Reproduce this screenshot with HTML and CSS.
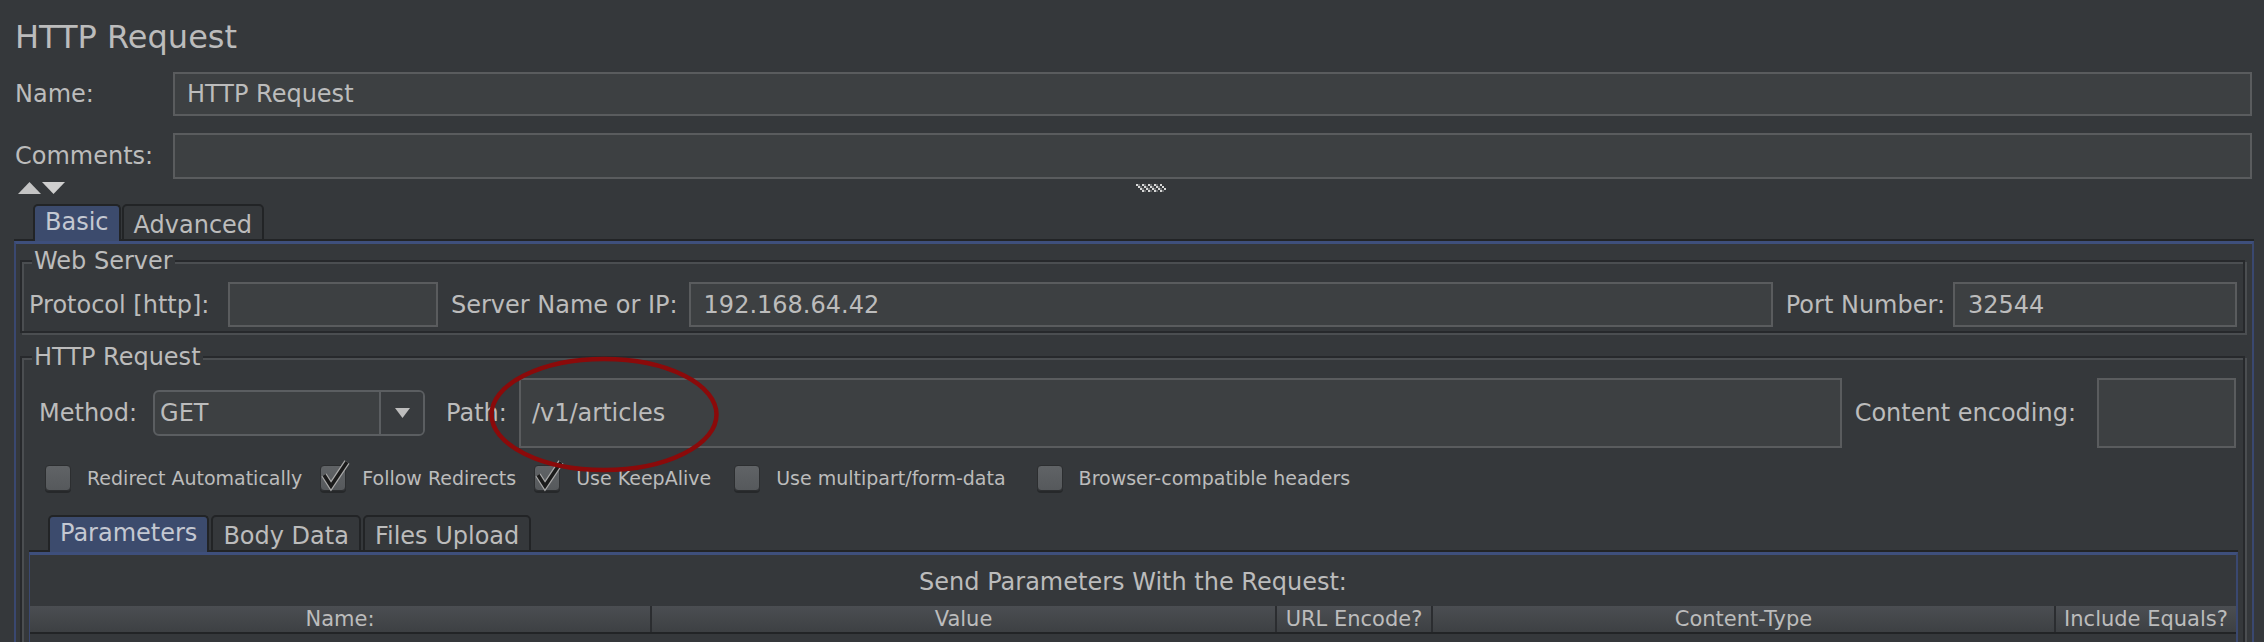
FILE: index.html
```html
<!DOCTYPE html>
<html lang="en">
<head>
<meta charset="utf-8">
<title>HTTP Request</title>
<link rel="stylesheet" href="styles.css">
</head>
<body>
<div class="page">
  <h1 class="title">HTTP Request</h1>

  <div class="row name-row">
    <label class="lbl-main">Name:</label>
    <div class="input">HTTP Request</div>
  </div>
  <div class="row comments-row">
    <label class="lbl-main">Comments:</label>
    <div class="input"></div>
  </div>

  <div class="splitter">
    <svg class="arrows" width="48" height="12" viewBox="0 0 48 12">
      <polygon points="0,12 11.5,0 23,12" fill="#c4c4c4"/>
      <polygon points="24,0 47,0 35.5,12" fill="#cfcfcf"/>
    </svg>
    <svg class="grip" width="30" height="8" viewBox="0 0 30 8">
      <g fill="#d8d8d8">
        <rect x="0" y="0" width="2" height="2"/><rect x="2" y="2" width="2" height="2"/><rect x="4" y="4" width="2" height="2"/><rect x="6" y="6" width="2" height="2"/>
        <rect x="6" y="0" width="2" height="2"/><rect x="8" y="2" width="2" height="2"/><rect x="10" y="4" width="2" height="2"/><rect x="12" y="6" width="2" height="2"/>
        <rect x="12" y="0" width="2" height="2"/><rect x="14" y="2" width="2" height="2"/><rect x="16" y="4" width="2" height="2"/><rect x="18" y="6" width="2" height="2"/>
        <rect x="18" y="0" width="2" height="2"/><rect x="20" y="2" width="2" height="2"/><rect x="22" y="4" width="2" height="2"/><rect x="24" y="6" width="2" height="2"/>
        <rect x="24" y="0" width="2" height="2"/><rect x="26" y="2" width="2" height="2"/><rect x="28" y="4" width="2" height="2"/>
      </g>
      <g fill="#6a6c6e">
        <rect x="2" y="0" width="2" height="2"/><rect x="4" y="2" width="2" height="2"/><rect x="6" y="4" width="2" height="2"/><rect x="8" y="6" width="2" height="2"/>
        <rect x="8" y="0" width="2" height="2"/><rect x="10" y="2" width="2" height="2"/><rect x="12" y="4" width="2" height="2"/><rect x="14" y="6" width="2" height="2"/>
        <rect x="14" y="0" width="2" height="2"/><rect x="16" y="2" width="2" height="2"/><rect x="18" y="4" width="2" height="2"/><rect x="20" y="6" width="2" height="2"/>
        <rect x="20" y="0" width="2" height="2"/><rect x="22" y="2" width="2" height="2"/><rect x="24" y="4" width="2" height="2"/><rect x="26" y="6" width="2" height="2"/>
      </g>
    </svg>
  </div>

  <div class="tabs outer-tabs">
    <div class="tab active">Basic</div>
    <div class="tab">Advanced</div>
  </div>

  <div class="panel">
    <fieldset class="group web">
      <legend>Web Server</legend>
      <div class="frow web-row">
        <label class="lbl lbl-protocol">Protocol [http]:</label>
        <div class="input protocol-input"></div>
        <label class="lbl lbl-server">Server Name or IP:</label>
        <div class="input server-input">192.168.64.42</div>
        <label class="lbl lbl-port">Port Number:</label>
        <div class="input port-input">32544</div>
      </div>
    </fieldset>

    <fieldset class="group req">
      <legend>HTTP Request</legend>
      <div class="frow method-row">
        <label class="lbl lbl-method">Method:</label>
        <div class="combo">
          <span class="combo-value">GET</span>
          <span class="combo-btn">
            <svg width="15" height="10" viewBox="0 0 15 10"><polygon points="0,0 15,0 7.5,10" fill="#bdbdbd"/></svg>
          </span>
        </div>
        <label class="lbl lbl-path">Path:</label>
        <div class="input path-input">/v1/articles</div>
        <label class="lbl lbl-enc">Content encoding:</label>
        <div class="input enc-input"></div>
      </div>

      <div class="checks">
        <div class="check"><span class="box"></span><span class="check-label">Redirect Automatically</span></div>
        <div class="check"><span class="box checked"><svg class="tick" width="32" height="34" viewBox="0 0 32 34"><path d="M6 17 L13 28 L29 4" fill="none" stroke="#a8a8a8" stroke-width="6" stroke-linejoin="miter"/><path d="M6 17 L13 28 L29 4" fill="none" stroke="#1b1b1b" stroke-width="3.5"/></svg></span><span class="check-label">Follow Redirects</span></div>
        <div class="check keepalive"><span class="box checked"><svg class="tick" width="32" height="34" viewBox="0 0 32 34"><path d="M6 17 L13 28 L29 4" fill="none" stroke="#a8a8a8" stroke-width="6" stroke-linejoin="miter"/><path d="M6 17 L13 28 L29 4" fill="none" stroke="#1b1b1b" stroke-width="3.5"/></svg></span><span class="check-label">Use KeepAlive</span></div>
        <div class="check multipart"><span class="box"></span><span class="check-label">Use multipart/form-data</span></div>
        <div class="check"><span class="box"></span><span class="check-label">Browser-compatible headers</span></div>
      </div>

      <div class="tabs inner-tabs">
        <div class="tab active">Parameters</div>
        <div class="tab">Body Data</div>
        <div class="tab">Files Upload</div>
      </div>

      <div class="inner-panel">
        <div class="caption">Send Parameters With the Request:</div>
        <div class="thead">
          <div class="th">Name:</div>
          <div class="th">Value</div>
          <div class="th">URL Encode?</div>
          <div class="th">Content-Type</div>
          <div class="th">Include Equals?</div>
        </div>
        <div class="tbody"></div>
      </div>
    </fieldset>
  </div>

  <svg class="annotation" width="2264" height="642" viewBox="0 0 2264 642">
    <ellipse cx="604" cy="414.5" rx="112.5" ry="55.5" fill="none" stroke="#8b0a0a" stroke-width="4.5"/>
  </svg>
</div>
</body>
</html>
```

FILE: styles.css
```css
* { box-sizing: border-box; }

html, body {
  margin: 0;
  padding: 0;
  background: #35383b;
}

.page {
  position: relative;
  width: 2264px;
  height: 642px;
  overflow: hidden;
  background: #35383b;
  color: #bcbcbc;
  font-family: "DejaVu Sans", "Liberation Sans", sans-serif;
  font-size: 24px;
}

.title {
  margin: 0;
  padding: 17px 0 0 15px;
  height: 57px;
  font-size: 32px;
  line-height: 40px;
  font-weight: normal;
}

.row {
  display: flex;
  align-items: center;
  padding: 0 12px 0 15px;
}

.name-row { margin-top: 15px; height: 44px; }
.comments-row { margin-top: 17px; height: 46px; }

.lbl-main {
  width: 158px;
  flex: none;
  line-height: 28px;
}

.input {
  height: 100%;
  background: #3d4042;
  border: 2px solid #5a5c5e;
  padding-left: 12px;
  display: flex;
  align-items: center;
  line-height: 28px;
  color: #bcbcbc;
}

.row .input { flex: 1; }

.splitter {
  height: 25px;
  display: flex;
  align-items: flex-start;
  padding-left: 18px;
}
.arrows { margin-top: 3px; flex: none; }
.grip { margin-top: 5px; margin-left: 1070px; flex: none; }

/* Tabs */
.tabs {
  display: flex;
  align-items: flex-end;
  height: 37px;
  gap: 1px;
}
.outer-tabs { padding-left: 33px; }

.tab {
  height: 37px;
  border: 2px solid #222426;
  border-radius: 5px 5px 0 0;
  padding: 5px 10px 0 10px;
  line-height: 28px;
  background: #35383b;
  color: #bcbcbc;
}
.tab.active {
  background: #3c4b6d;
  border-bottom: none;
  padding-top: 2px;
  color: #c4c8d2;
}

/* Outer panel */
.panel {
  margin: 0 10px 0 14px;
  border-top: 3px solid #3e4f7c;
  border-left: 2px solid #3a4870;
  border-right: 2px solid #3a4870;
  box-shadow: 0 -2px 0 #222426;
  height: 420px;
}

/* Etched group boxes */
.group {
  margin: 0;
  padding: 0;
  min-width: 0;
  border: 2px solid #27292c;
  box-shadow: inset 2px 2px 0 #4b4e51, 2px 2px 0 #4b4e51;
}
.group legend {
  font-size: 24px;
  line-height: 28px;
  padding: 0 2px;
  margin-left: 10px;
  background: #35383b;
  color: #bcbcbc;
}

.web { margin: 3px 7px 0 4px; padding-bottom: 4px; }
.req { margin: 10px 7px 0 4px; height: 400px; }

.frow {
  display: flex;
  align-items: center;
}
.lbl { flex: none; line-height: 28px; white-space: nowrap; }

.web-row {
  margin-top: 7px;
  height: 45px;
  padding: 0 6px 0 7px;
}
.lbl-protocol { width: 188px; margin-right: 11px; }
.protocol-input { width: 210px; flex: none; margin-right: 13px; }
.lbl-server { margin-right: 11px; }
.server-input { flex: 1; margin-right: 13px; padding-left: 13px; }
.lbl-port { margin-right: 8px; }
.port-input { width: 284px; flex: none; padding-left: 13px; }

.method-row {
  margin-top: 7px;
  height: 70px;
  padding: 0 7px 0 17px;
}
.lbl-method { margin-right: 16px; }
.combo {
  width: 272px;
  height: 46px;
  flex: none;
  display: flex;
  border: 2px solid #5b5e61;
  border-radius: 6px;
  background: #3d4042;
  margin-right: 21px;
  overflow: hidden;
}
.combo-value {
  flex: 1;
  padding-left: 5px;
  display: flex;
  align-items: center;
  line-height: 28px;
}
.combo-btn {
  width: 44px;
  flex: none;
  border-left: 2px solid #5b5e61;
  background: #383b3e;
  display: flex;
  align-items: center;
  justify-content: center;
}
.lbl-path { margin-right: 12px; }
.path-input { flex: 1; margin-right: 13px; padding-left: 11px; }
.lbl-enc { margin-right: 21px; }
.enc-input { width: 139px; flex: none; }

/* Checkboxes */
.checks {
  display: flex;
  align-items: center;
  height: 30px;
  margin-top: 15px;
  padding-left: 23px;
  font-size: 19px;
}
.check {
  display: flex;
  align-items: center;
  margin-right: 18px;
}
.check.keepalive { margin-right: 23px; }
.check.multipart { margin-right: 31px; }
.box {
  position: relative;
  width: 26px;
  height: 26px;
  flex: none;
  margin-right: 16px;
  border: 1px solid #2c2e30;
  border-radius: 4px;
  background: linear-gradient(#606366, #56595c);
  box-shadow: 0 2px 0 rgba(0, 0, 0, 0.28);
}
.tick {
  position: absolute;
  left: -3px;
  top: -8px;
}
.check-label { line-height: 24px; white-space: nowrap; }

/* Inner tabs & table */
.inner-tabs {
  margin-top: 22px;
  padding-left: 26px;
  gap: 2px;
}
.inner-tabs .tab { padding-left: 10px; padding-right: 10px; }

.inner-panel {
  margin: 0 5px 0 7px;
  border-top: 3px solid #3e4f7c;
  border-left: 1px solid #3a4870;
  border-right: 2px solid #3a4870;
  box-shadow: 0 -2px 0 #222426;
  height: 300px;
}
.caption {
  padding-top: 12px;
  height: 42px;
  line-height: 30px;
  text-align: center;
}
.thead {
  margin-top: 9px;
  height: 28px;
  display: grid;
  grid-template-columns: 620px 625px 156px 623px 1fr;
  background: linear-gradient(#4b4e52, #3d4043);
  border-bottom: 2px solid #222426;
  font-size: 21px;
}
.th {
  text-align: center;
  line-height: 26px;
  white-space: nowrap;
  border-left: 2px solid #2b2d30;
  overflow: hidden;
}
.th:first-child { border-left: none; }

.annotation {
  position: absolute;
  left: 0;
  top: 0;
  pointer-events: none;
}
```
